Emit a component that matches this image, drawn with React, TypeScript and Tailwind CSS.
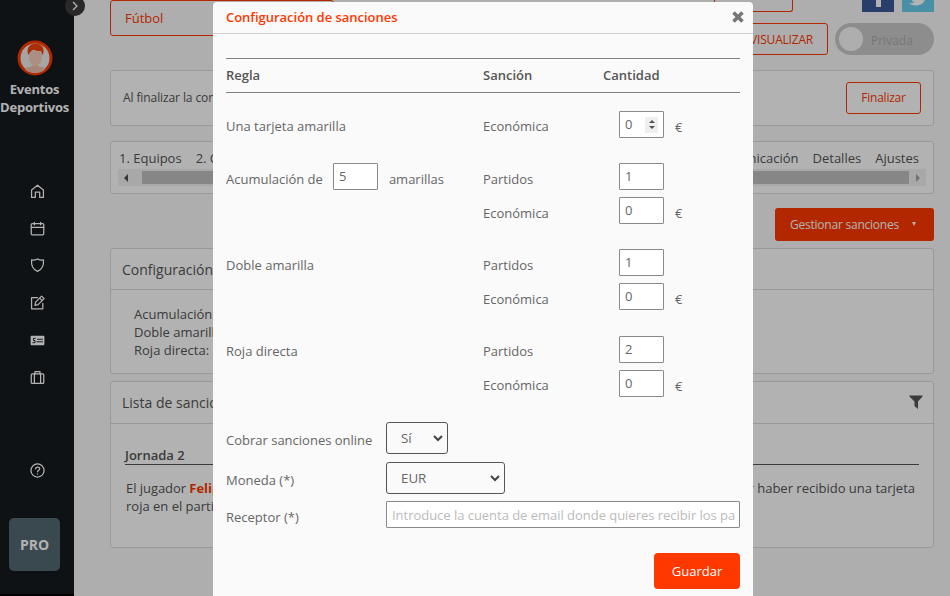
import type { ReactNode } from "react";
import clsx from "clsx";

const LABEL = "font-['Open_Sans',sans-serif] text-[13px] leading-[18px] whitespace-nowrap";

function NavIcon({ children, className }: { children: ReactNode; className?: string }) {
  return (
    <svg
      viewBox="0 0 24 24"
      className={clsx("w-[15px] h-[15px] shrink-0", className)}
      fill="none"
      stroke="currentColor"
      strokeWidth="2"
      strokeLinecap="round"
      strokeLinejoin="round"
    >
      {children}
    </svg>
  );
}

function Avatar() {
  return (
    <svg viewBox="0 0 36 36" className="w-9 h-9 shrink-0">
      <circle cx="18" cy="18" r="16" fill="#ececec" stroke="#ff3800" strokeWidth="3" />
      <path d="M8 29.500c1-2.500 5-2.500 7.500-3.500V22h5.500v4c2.500 1 6 1 7 3.500A15 15 0 0 1 8 29.500Z" fill="#edc0ac" />
      <path d="M11.800 11h13v6c0 5-3.500 9-6.500 9s-6.500-4-6.500-9Z" fill="#f5cdbb" />
      <path d="M11 14.500C9.500 8 12 4 18.500 3.800c6.500 0 9.500 4.200 7.500 10.700h-1c0-1.500-.3-2.500-1-3.500-2.500.2-5.500-.3-7.500-1.300-2 1-4 2.300-4.700 4.800Z" fill="#f54208" />
    </svg>
  );
}

function Sidebar() {
  return (
    <aside className="w-[74px] shrink-0 h-full bg-[#151a1e] text-white flex flex-col items-center border-b-2 border-black relative">
      <div className="absolute -top-1 left-[65px] w-5 h-5 rounded-full bg-[#3c3c3c] flex items-center justify-center">
        <svg viewBox="0 0 10 10" className="w-2.5 h-2.5" fill="none" stroke="#fff" strokeWidth="1.3">
          <path d="M3 1l4 4-4 4" />
        </svg>
      </div>
      <div className="mt-10 -ml-[5px] flex flex-col items-center">
        <Avatar />
        <p className="mt-1 font-['Open_Sans',sans-serif] font-bold text-[13px] leading-[18px] tracking-[-0.2px] text-center">
          Eventos<br />Deportivos
        </p>
      </div>
      <nav className="mt-[67.500px] ml-px flex flex-col items-center gap-[22.3px]">
        <NavIcon>
          <path d="M2.500 21.500V9.500L12 2l9.500 7.500v12H15.500V13h-7v8.500Z" />
        </NavIcon>
        <NavIcon>
          <rect x="2" y="4" width="20" height="18" rx="1.500" />
          <path d="M2 10h20M7 2v4M17 2v4" />
        </NavIcon>
        <NavIcon>
          <path d="M12 21.500C5 18.500 1.500 13.500 2.500 3 6 4 9 3 12 1.500c3 1.500 6 2.500 9.500 1.500C22.500 13.500 19 18.500 12 21.500Z" />
        </NavIcon>
        <NavIcon>
          <path d="M12 4H2.500v18h18v-8.500" />
          <path d="M18.500 1.800l4 4L13 15.500l-5 1 1-5ZM15.500 5l4 4" />
        </NavIcon>
        <NavIcon>
          <rect x="1" y="4.500" width="22" height="15" rx="1.500" fill="currentColor" stroke="none" />
          <path d="M8.500 8.500H5.500v3.500H8v3.500H4.500M12 10h8M11 14h9" stroke="#151a1e" strokeWidth="1.500" />
        </NavIcon>
        <NavIcon>
          <rect x="2" y="6" width="20" height="15.500" rx="1.500" />
          <path d="M7 6v15.500M17 6v15.500M8 6V2.500h8V6" />
        </NavIcon>
      </nav>
      <NavIcon className="mt-[78px] ml-px">
        <circle cx="12" cy="12" r="10.500" />
        <path d="M9 9.500c0-4 6.500-4 6.500-.2 0 2.200-3.300 2.300-3.300 4.700M12.200 17.500v.2" />
      </NavIcon>
      <div className="mt-10 -ml-[5px] w-[51px] h-[53px] rounded-[5px] bg-[#546872] flex items-center justify-center font-['Open_Sans',sans-serif] font-bold text-[14px]">
        PRO
      </div>
    </aside>
  );
}

function Card({ className, children }: { className?: string; children: ReactNode }) {
  return (
    <section className={clsx("border border-[#dcdcdc] rounded-[3px] bg-white overflow-hidden", className)}>
      {children}
    </section>
  );
}

function Page() {
  return (
    <main className={clsx("flex-1 min-w-0 pl-9 pr-4 bg-[#fafafa] text-[#555]", LABEL)}>
      <div className="flex justify-between h-[70px]">
        <div className="w-[224px] h-9 border border-[#ff3800] rounded-[3px] pl-3.5 text-[#ff3800] leading-[34px]">
          Fútbol
        </div>
        <div className="flex flex-col items-end">
          <div className="h-3 flex">
            <div className="w-[79px] border border-t-0 border-[#ff3800] rounded-b-[3px]" />
            <div className="ml-[69px] w-8 bg-[#3b5998] flex justify-center">
              <span className="w-[5px] h-[7px] bg-white" />
            </div>
            <div className="ml-2 w-8 bg-[#69cdee] overflow-hidden">
              <svg viewBox="0 0 32 12" className="w-8 h-3">
                <path d="M7 3.300c2 .2 4-.2 5.500-1.300C10.800 1.800 9.800.8 9.300-1H23C22.700 2.500 19 5.500 14 5.500 11.300 5.500 9 4.700 7 3.300Z" fill="#fff" />
              </svg>
            </div>
          </div>
          <div className="mt-[11px] flex gap-[7px] h-8">
            <div className="w-[112px] border border-[#ff3800] rounded-[3px] pr-3.5 pt-0.5 flex items-center justify-end text-[#ff3800] text-[12px] tracking-[-0.2px]">
              VISUALIZAR
            </div>
            <div className="w-[99px] rounded-full bg-[#cbcbcb] flex items-center pl-1">
              <span className="w-6 h-6 rounded-full bg-[#fafafa]" />
              <span className="ml-2 pt-[3px] text-[12px] text-[#aaa]">Privada</span>
            </div>
          </div>
        </div>
      </div>

      <Card className="h-14 flex items-center justify-between px-3">
        <span className="text-[12px] tracking-[-0.1px]">Al finalizar la competición</span>
        <button className="w-[75px] h-8 border border-[#ff3800] rounded-[3px] text-[#ff3800] text-[12px] tracking-[-0.25px]">
          Finalizar
        </button>
      </Card>

      <Card className="mt-[15px] h-[53px] px-[7px] pt-[7px]">
        <div className="flex justify-between pl-px pr-[7px]">
          <span className="flex gap-3.5"><span>1. Equipos</span><span>2. Calendario</span></span>
          <span className="flex gap-3.5"><span>Comunicación</span><span>Detalles</span><span>Ajustes</span></span>
        </div>
        <div className="mt-0.5 h-[17px] bg-[#f1f1f1] flex items-center px-1.5">
          <span className="border-y-4 border-y-transparent border-r-4 border-r-[#505050]" />
          <span className="ml-[14px] w-[767px] h-[13px] bg-[#c1c1c1]" />
          <span className="ml-auto border-y-4 border-y-transparent border-l-4 border-l-[#a3a3a3]" />
        </div>
      </Card>

      <div className="mt-3.5 flex justify-end">
        <button className="w-[159px] h-[33px] rounded-[3px] bg-[#ff3800] text-white text-[12px] tracking-[-0.23px] flex items-center pl-[15px]">
          Gestionar sanciones
          <span className="ml-[13px] -mt-0.5 border-x-[2.500px] border-x-transparent border-t-4 border-t-white" />
        </button>
      </div>

      <Card className="mt-[7px] h-[126px]">
        <h2 className="h-[41px] border-b border-[#dcdcdc] pl-[11px] text-[14px] leading-[41px]">Configuración</h2>
        <div className="pl-[23px] pt-[15px]">
          <p>Acumulación de 5 amarillas</p>
          <p>Doble amarilla: 1 partido</p>
          <p>Roja directa: 2 partidos</p>
        </div>
      </Card>

      <Card className="mt-[7px] h-[167px]">
        <div className="h-[42px] border-b border-[#dcdcdc] pl-[11px] pr-2.5 flex items-center justify-between">
          <h2 className="text-[14px]">Lista de sanciones</h2>
          <svg viewBox="0 0 14 14" className="w-3.5 h-3.5 -mt-0.5" fill="#555">
            <path d="M.500.500h13v1L9 6.500V14L5.500 11V6.500L.500 1.500Z" />
          </svg>
        </div>
        <div className="ml-3.5 mr-3.5 mt-[22px]">
          <h3 className="font-semibold border-b border-[#555]">Jornada 2</h3>
          <p className="mt-3.5 flex justify-between pl-px pr-1">
            <span className="tracking-[-0.05px]">El jugador <b className="text-[#ff3800]">Felipe</b></span>
            <span>por haber recibido una tarjeta</span>
          </p>
          <p className="pl-px">roja en el partido</p>
        </div>
      </Card>
    </main>
  );
}

function NumberBox({ value, spinner }: { value: number; spinner?: boolean }) {
  return (
    <span className="w-[45px] h-[27px] shrink-0 border border-[#8a8a8a] rounded-[1px] bg-white pl-[5px] pr-[5px] flex items-center justify-between text-[13px] text-[#666]">
      <span className="pb-0.5">{value}</span>
      {spinner && (
        <span className="w-[13px] h-4 bg-[#efefef] flex flex-col items-center justify-center gap-[3px]">
          <span className="border-x-[3px] border-x-transparent border-b-[3px] border-b-[#505050]" />
          <span className="border-x-[3px] border-x-transparent border-t-[3px] border-t-[#505050]" />
        </span>
      )}
    </span>
  );
}

interface Penalty { kind: string; value: number; spinner?: boolean; }
interface Rule { label: ReactNode; penalties: Penalty[]; className: string; kindClass: string; }

const rules: Rule[] = [
  {
    label: "Una tarjeta amarilla",
    penalties: [{ kind: "Económica", value: 0, spinner: true }],
    className: "mt-[18px]",
    kindClass: "pt-0.5",
  },
  {
    label: (
      <>
        <span className="pt-px">Acumulación de</span>
        <span className="ml-2.5 mr-[11px] -mt-1.5"><NumberBox value={5} /></span>
        <span className="pt-px">amarillas</span>
      </>
    ),
    penalties: [{ kind: "Partidos", value: 1 }, { kind: "Económica", value: 0 }],
    className: "mt-[25px]",
    kindClass: "pt-1",
  },
  {
    label: <span className="pt-px">Doble amarilla</span>,
    penalties: [{ kind: "Partidos", value: 1 }, { kind: "Económica", value: 0 }],
    className: "mt-[25px]",
    kindClass: "pt-1",
  },
  {
    label: "Roja directa",
    penalties: [{ kind: "Partidos", value: 2 }, { kind: "Económica", value: 0 }],
    className: "mt-[26px]",
    kindClass: "pt-0.5",
  },
];

function Select({ value, className }: { value: string; className: string }) {
  return (
    <div className={clsx("h-8 border border-[#555] rounded-[3px] bg-[#fafafa] pl-3.5 pr-1 flex items-center justify-between text-[13.333px]", className)}>
      {value}
      <svg viewBox="0 0 10 7" className="w-2.5 h-[7px]" fill="none" stroke="#444" strokeWidth="2">
        <path d="M1 1l4 4 4-4" />
      </svg>
    </div>
  );
}

function SanctionsModal() {
  return (
    <div className={clsx("w-[540px] h-[620px] rounded-t-[4px] bg-[#fafafa] text-[#666]", LABEL)}>
      <header className="h-8 border-b border-[#d0d0d0] pl-[13px] pr-[9px] flex items-center justify-between">
        <h1 className="pb-0.5 font-semibold tracking-[-0.03px] text-[#ff3800]">Configuración de sanciones</h1>
        <svg viewBox="0 0 12 12" className="w-3 h-3 -mt-0.5" stroke="#777" strokeWidth="3.600">
          <path d="M1.500 1.500l9 9M10.500 1.500l-9 9" />
        </svg>
      </header>
      <div className="px-[13px] pt-6">
        <div className="h-[35px] pb-0.5 border-y border-[#808080] grid grid-cols-[257px_120px_1fr] items-center font-semibold text-[#555]">
          <span>Regla</span><span>Sanción</span><span>Cantidad</span>
        </div>

        {rules.map((rule, i) => (
          <div key={i} className={clsx("flex", rule.className)}>
            <div className="w-[257px] pt-1.5 h-[27px] flex items-start">{rule.label}</div>
            <div className="flex flex-col gap-[7px]">
              {rule.penalties.map((p) => (
                <div key={p.kind} className="h-[27px] flex items-center">
                  <span className={clsx("w-[136px]", rule.kindClass)}>{p.kind}</span>
                  <NumberBox value={p.value} spinner={p.spinner} />
                  {p.kind === "Económica" && <span className="ml-[11px] pt-1">€</span>}
                </div>
              ))}
            </div>
          </div>
        ))}

        <div className="mt-[25px] flex">
          <span className="w-40 pt-[9px]">Cobrar sanciones online</span>
          <Select value="Sí" className="w-[62px]" />
        </div>
        <div className="mt-2 flex">
          <span className="w-40 pt-[9px]">Moneda (*)</span>
          <Select value="EUR" className="w-[119px]" />
        </div>
        <div className="mt-[7px] flex">
          <span className="w-40 pt-[7px]">Receptor (*)</span>
          <div className="w-[354px] h-[27px] border border-[#8a8a8a] rounded-[1px] bg-white px-[5px] text-[#bbb] leading-[26px] tracking-[-0.03px]">
            Introduce la cuenta de email donde quieres recibir los pa
          </div>
        </div>
        <div className="mt-[25px] flex justify-end">
          <button className="w-[86px] h-9 rounded-[4px] bg-[#ff3800] text-white">Guardar</button>
        </div>
      </div>
    </div>
  );
}

export default function App() {
  return (
    <div className="relative w-[950px] h-[596px] overflow-hidden">
      <div className="flex h-full">
        <Sidebar />
        <Page />
      </div>
      <div className="absolute inset-0 bg-black/30 pt-0.5 pl-[213px]">
        <SanctionsModal />
      </div>
    </div>
  );
}
